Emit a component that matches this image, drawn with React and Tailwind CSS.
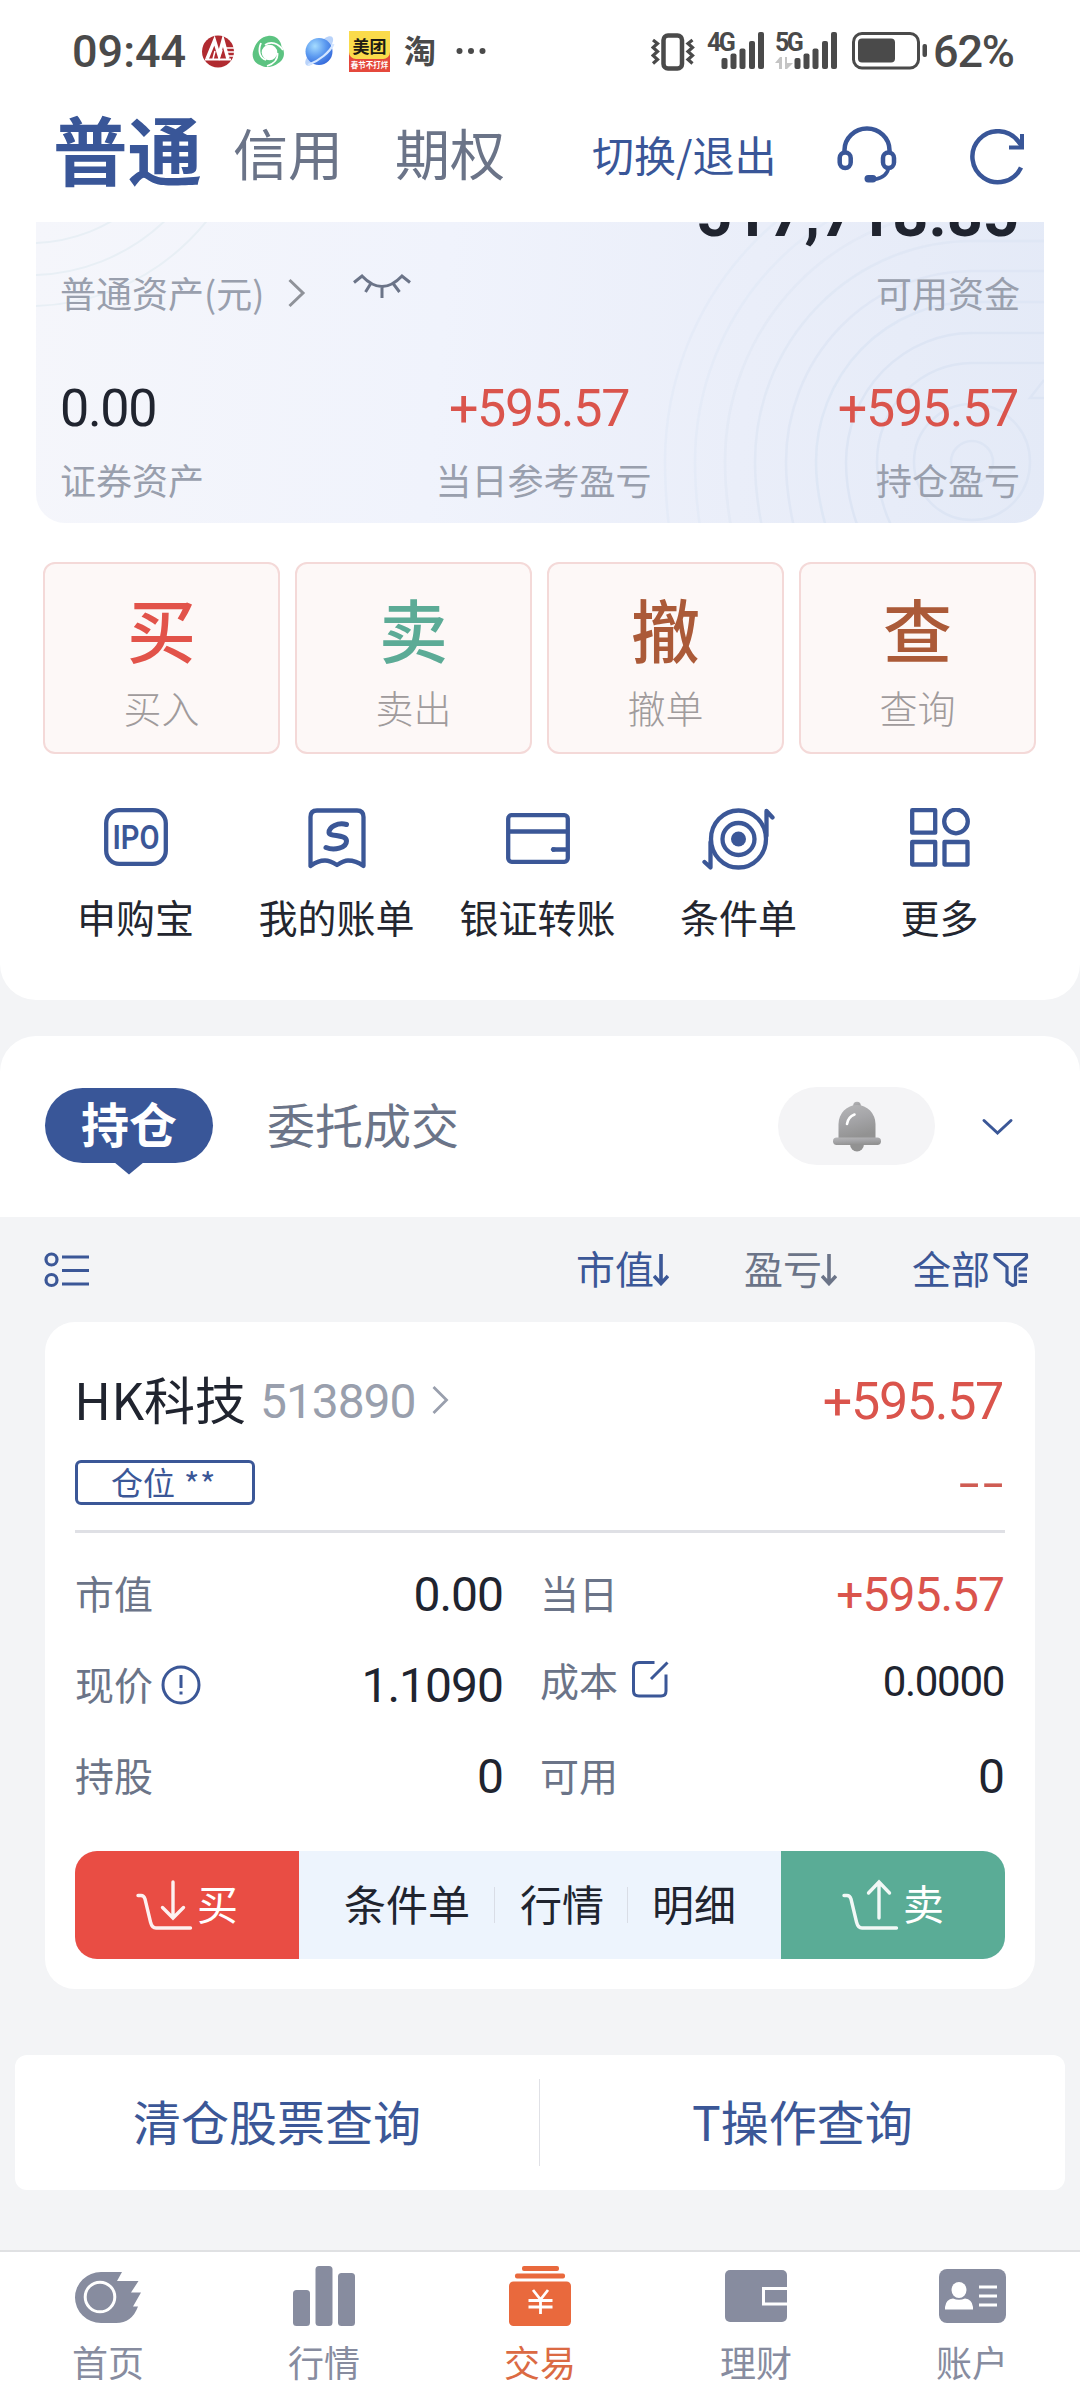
const CJK = "font-['Noto_Sans_CJK_SC',sans-serif]";
const NUM = "font-['Roboto','Noto_Sans_CJK_SC',sans-serif]";

function StatusBar() {
  return (
    <div className={`flex h-[102px] items-start text-[#4a4a4a] ${NUM}`}>
      <span className="mt-[29px] ml-[72px] w-[114px] text-[45px] leading-none font-medium whitespace-nowrap">09:44</span>
      <svg className="mt-[35px] ml-[16px]" width="32" height="33" viewBox="0 0 32 33">
        <circle cx="16" cy="16.5" r="16" fill="#b02a30" />
        <g stroke="#fff" fill="none" strokeWidth="2">
          <path d="M3 24.5h26" />
          <path d="M5 24 12.5 5.5 17 20 21 5.500 26 24" strokeWidth="3.400" />
          <path d="M11 24l2-8M17 24l3-9" strokeWidth="1.500" />
          <path d="M24 13h8M24.500 17h8M25 21h7" strokeWidth="1.600" />
        </g>
      </svg>
      <svg className="mt-[35px] ml-[18px]" width="33" height="33" viewBox="0 0 33 33" fill="none">
        <path d="M16 1C23 0 29 5 29.500 11.500C34 17 32 25 26.500 28C21 33 12 33 8 30C2 28 -1 21 1.500 15C4 7 9 2 16 1Z" fill="#5cc381" />
        <circle cx="17.500" cy="17.500" r="7.800" fill="#fff" />
        <g stroke="#fff" strokeWidth="1.800">
          <path d="M13 10C19 6 26 8 31 15" />
          <path d="M25.500 18C26 24 22 29 15 31" />
          <path d="M14 25C7 23 6 15 9 8" />
        </g>
      </svg>
      <svg className="mt-[35px] ml-[19px]" width="32" height="33" viewBox="0 0 32 33">
        <defs>
          <radialGradient id="planet" cx="0.35" cy="0.3" r="0.8">
            <stop offset="0" stopColor="#a5dcff" />
            <stop offset="0.500" stopColor="#5c9af0" />
            <stop offset="1" stopColor="#2f62d8" />
          </radialGradient>
        </defs>
        <path d="M21 3c5-3 9-2 8 3-2 9-14 20-22 24-5 2-7-1-5-6z" fill="#b9d3fa" />
        <circle cx="15" cy="16.500" r="13.500" fill="url(#planet)" />
        <path d="M29.500 9C26 17 15 26 4 30" fill="none" stroke="#d4e6ff" strokeWidth="2.200" />
      </svg>
      <div className={`mt-[31px] ml-[13px] flex h-[41px] w-[41px] flex-col items-center bg-[#e5483c] text-center ${CJK}`}>
        <div className="flex h-[28px] w-full items-center justify-center rounded-b-[7px] bg-[#fadb4b] text-[17px] leading-none font-bold text-[#1c1a14]">美团</div>
        <div className="mt-[2px] text-[7.500px] leading-none font-bold whitespace-nowrap text-white">春节不打烊</div>
      </div>
      <span className={`mt-[33px] ml-[14px] text-[32px] leading-none font-bold ${CJK}`}>淘</span>
      <svg className="mt-[47px] ml-[20px]" width="30" height="8" viewBox="0 0 30 8" fill="#4a4a4a">
        <circle cx="3.500" cy="4" r="3" /><circle cx="15" cy="4" r="3" /><circle cx="26.500" cy="4" r="3" />
      </svg>
      <svg className="mt-[33px] ml-[165px]" width="44" height="38" viewBox="0 0 44 38" fill="none" stroke="#4a4a4a">
        <rect x="12.500" y="2.500" width="18.500" height="33" rx="4.500" strokeWidth="4.500" />
        <path d="M2 7l4.500 3.500-4.500 4 4.500 4-4.500 4 4.500 4-4.500 4M41.500 7l-4.500 3.500 4.500 4-4.500 4 4.500 4-4.500 4 4.500 4" strokeWidth="3.200" />
      </svg>
      <Signal label="4G" className="ml-[12px] w-[58px]" />
      <Signal label="5G" className="ml-[10px] w-[63px]" arrows />
      <svg className="mt-[32px] ml-[14px]" width="77" height="38" viewBox="0 0 77 38">
        <rect x="1.500" y="1.500" width="65" height="34.500" rx="8.500" fill="none" stroke="#4a4a4a" strokeWidth="3" />
        <rect x="6" y="6.500" width="37" height="24" rx="4" fill="#4a4a4a" />
        <rect x="70.500" y="12" width="4.500" height="13" rx="2" fill="#4a4a4a" />
      </svg>
      <span className="mt-[29px] ml-[4px] text-[45px] leading-none font-medium tracking-[-1.2px]">62%</span>
    </div>
  );
}

function Signal({ label, className, arrows }) {
  return (
    <div className={`relative mt-[32px] h-[38px] ${className}`}>
      <span className="absolute top-[-2px] left-0 text-[25px] leading-none font-bold tracking-[-2.500px]">{label}</span>
      <svg className="absolute top-0 right-0" width="63" height="38" viewBox="0 0 63 38" fill="#4a4a4a">
        {arrows && <path d="M0 31l5-6h2v12H4v-6zM10 25h2v6h6l-6 6h-2z" fill="#c4c4c4" />}
        <rect x="19.500" y="26" width="6" height="11" rx="2" />
        <rect x="28.500" y="21.500" width="6" height="15.500" rx="2" />
        <rect x="37.500" y="16.500" width="6" height="20.500" rx="2" />
        <rect x="47" y="9" width="6" height="28" rx="2" />
        <rect x="56" y="0" width="6" height="37" rx="2" />
      </svg>
    </div>
  );
}

function Header() {
  return (
    <div className="flex h-[120px] items-start leading-none whitespace-nowrap text-[#6b7488]">
      <span className="mt-[9px] ml-[53px] w-[149px] text-[74.5px] leading-none font-bold text-[#395698]">普通</span>
      <span className="mt-[22px] ml-[31px] text-[55px]">信用</span>
      <span className="mt-[22px] ml-[52px] text-[55px]">期权</span>
      <span className="mt-[31px] ml-[87px] w-[184px] text-[42px] text-[#395698]">切换/退出</span>
      <svg className="mt-[24px] ml-[61px]" width="60" height="58" viewBox="0 0 60 58" fill="none" stroke="#395698" strokeWidth="4.500">
        <path d="M7.500 26V24a22.500 21.500 0 0 1 45 0v2" />
        <rect x="2.700" y="26.500" width="11" height="15.500" rx="5.500" />
        <rect x="46" y="26.500" width="11" height="15.500" rx="5.500" />
        <path d="M51.500 42c-1 6-6 10-14 11.500" strokeWidth="3.600" />
        <rect x="27.500" y="49" width="12" height="7.500" rx="3.700" fill="#395698" stroke="none" />
      </svg>
      <svg className="mt-[27px] ml-[73px]" width="56" height="56" viewBox="0 0 56 56" fill="none" stroke="#395698" strokeWidth="4.500">
        <path d="M51 38.500A25.500 25.500 0 1 1 48 12l4 5" />
        <path d="M52 5v13.500H39" strokeWidth="4" />
      </svg>
    </div>
  );
}

function AssetCard() {
  return (
    <div className="relative mx-[36px] h-[301px] overflow-hidden rounded-b-[29px] bg-linear-[95deg,#f5f6fb_0%,#f0f3fc_40%,#eaeef9_70%,#e4eaf7_100%] text-[36px] leading-none text-[#999fad]">
      <svg className="absolute inset-0" width="1008" height="301" viewBox="0 0 1008 301" fill="none" strokeWidth="2">
        <g stroke="#e8eff5">
          <circle cx="-6" cy="-142" r="163" /><circle cx="-6" cy="-142" r="195" /><circle cx="-6" cy="-142" r="226" />
        </g>
        <g stroke="#dde5f4" strokeWidth="2.500">
          <circle cx="936" cy="240" r="21" /><circle cx="936" cy="240" r="58" />
          <path d="M1008 141H936A95 99 0 0 0 841 240Q841 275 856 305" />
          <path d="M1008 111H936A126 130 0 0 0 810 240Q810 273 822 305" />
          <path d="M1008 80H936A156 160 0 0 0 780 240Q780 270 790 305" opacity="0.900" />
          <path d="M1008 49H936A186 191 0 0 0 750 240Q750 270 758 305" opacity="0.800" />
          <path d="M1008 19H936A217 221 0 0 0 719 240Q719 270 726 305" opacity="0.700" />
          <path d="M936-12A247 252 0 0 0 689 240Q689 270 695 305" opacity="0.500" />
          <path d="M936-42A277 282 0 0 0 659 240Q659 270 664 305" opacity="0.400" />
          <path d="M936-72A307 312 0 0 0 629 240Q629 270 633 305" opacity="0.400" />
          <path d="M1008 158l-14 18h14" />
        </g>
      </svg>
      <div className="relative px-[24px]">
        <div className={`-mt-[39px] pr-[1px] text-right text-[63px] leading-none font-bold whitespace-nowrap text-[#20242f] ${NUM}`}>517,718.85</div>
        <div className="mt-[28px] flex h-[36px] items-start">
          <span className="w-[203px] whitespace-nowrap">普通资产(元)</span>
          <svg className="mt-[4px] ml-[25px]" width="18" height="30" viewBox="0 0 18 30" fill="none" stroke="#8f9299" strokeWidth="3"><path d="M1.500 2 15 15 1.500 28" /></svg>
          <svg className="-mt-[1px] ml-[46px]" width="60" height="26" viewBox="0 0 60 26" fill="none" stroke="#6b7488" strokeWidth="3"><path d="M2 9.500 10 3Q30 24 50 3L58 9.500M18.500 11l-5 8M30 14v11M41.500 11l6 8" /></svg>
          <span className="ml-auto">可用资金</span>
        </div>
        <div className={`mt-[73px] grid grid-cols-3 text-[52px] leading-none tracking-[-1.3px] text-[#da544c] ${NUM}`}>
          <span className="text-[#20242f]">0.00</span>
          <span className="pr-[2px] text-center">+595.57</span>
          <span className="pr-[2px] text-right">+595.57</span>
        </div>
        <div className="mt-[26px] grid grid-cols-3">
          <span>证券资产</span>
          <span className="pl-[7px] text-center">当日参考盈亏</span>
          <span className="text-right">持仓盈亏</span>
        </div>
      </div>
    </div>
  );
}

const actions = [
  { char: "买", label: "买入", color: "text-[#e2534a]" },
  { char: "卖", label: "卖出", color: "text-[#5cab96]" },
  { char: "撤", label: "撤单", color: "text-[#ab5a38]" },
  { char: "查", label: "查询", color: "text-[#ab5a38]" },
];

function Actions() {
  return (
    <div className="mt-[39px] ml-[43px] grid w-[993px] grid-cols-4 gap-[15px] leading-none">
      {actions.map((a) => (
        <div key={a.char} className="flex h-[192px] flex-col items-center rounded-[12px] border-2 border-[#f4d9d8] bg-[#fdf8f7] pt-[30px]">
          <span className={`text-[69px] leading-none font-medium ${a.color}`}>{a.char}</span>
          <span className="mt-[25px] text-[38px] leading-none font-light text-[#a09b9c]">{a.label}</span>
        </div>
      ))}
    </div>
  );
}

const tools = [
  {
    label: "申购宝",
    icon: (
      <svg width="64" height="58" viewBox="0 0 64 58" fill="none" stroke="#3b5797" strokeWidth="4.300">
        <rect x="2.200" y="2.200" width="59.600" height="53.600" rx="13" />
        <text x="32" y="41" textAnchor="middle" fontFamily="Roboto" fontSize="33" fontWeight="600" fill="#3b5797" stroke="none" textLength="47" lengthAdjust="spacingAndGlyphs">IPO</text>
      </svg>
    ),
  },
  {
    label: "我的账单",
    icon: (
      <svg width="58" height="61" viewBox="0 0 58 61" fill="none" stroke="#3b5797" strokeWidth="4.300" strokeLinejoin="round">
        <path d="M2.500 58V9Q2.500 2.500 9 2.500H49Q55.500 2.500 55.500 9V58Q48 52.500 40 52.500Q36 52.500 29 57Q22 52.500 17 52.500Q10 52.500 2.500 58Z" />
        <path d="M38.500 16.500C30 14 21 19 21 24.500C21 29 38.500 26 38.500 33C38.500 40 26 43 18 39.500" strokeWidth="5" strokeLinecap="round" />
      </svg>
    ),
  },
  {
    label: "银证转账",
    icon: (
      <svg className="mt-[5px]" width="64" height="51" viewBox="0 0 64 51" fill="none" stroke="#3b5797" strokeWidth="4.300">
        <rect x="2.200" y="2.200" width="59.600" height="46.600" rx="3.500" />
        <path d="M2 18.500h60M62 36.500H46" />
        <path d="M47 36.500h1" strokeLinecap="round" />
      </svg>
    ),
  },
  {
    label: "条件单",
    icon: (
      <svg width="73" height="62" viewBox="0 0 73 62" fill="none" stroke="#3b5797" strokeWidth="4.300" strokeLinecap="round" strokeLinejoin="round">
        <ellipse cx="36.500" cy="31" rx="27.500" ry="28.500" />
        <circle cx="36.500" cy="31" r="16" />
        <circle cx="36.500" cy="31" r="7.500" fill="#3b5797" stroke="none" />
        <path d="M64.500 28V3L70.500 9.500M8.500 34V59.500L2.500 54" />
      </svg>
    ),
  },
  {
    label: "更多",
    icon: (
      <svg width="60" height="60" viewBox="0 0 60 60" fill="none" stroke="#3b5797" strokeWidth="4.300" strokeLinejoin="round">
        <rect x="2.200" y="2.200" width="23" height="22.500" />
        <ellipse cx="46" cy="13.500" rx="11.800" ry="11.800" />
        <rect x="2.200" y="34" width="23" height="22.500" />
        <rect x="34.500" y="34" width="23" height="22.500" />
      </svg>
    ),
  },
];

function Tools() {
  return (
    <div className="mt-[54px] ml-[35px] grid w-[1005px] grid-cols-5 text-[39px] leading-none text-[#23262f]">
      {tools.map((t) => (
        <div key={t.label} className="flex flex-col items-center">
          <div className="h-[62px]">{t.icon}</div>
          <span className="mt-[27px] whitespace-nowrap">{t.label}</span>
        </div>
      ))}
    </div>
  );
}

function Tabs() {
  return (
    <div className="mt-[36px] flex h-[181px] items-start rounded-t-[36px] bg-white pt-[52px] leading-none">
      <div className="relative ml-[45px] flex h-[75px] w-[168px] items-center justify-center rounded-full bg-[#395698] pb-[7px] text-[48px] font-bold text-white">
        持仓
        <svg className="absolute top-[74px] left-[69px]" width="30" height="13" viewBox="0 0 30 13" fill="#395698"><path d="M0 0h30L15 12.500z" /></svg>
      </div>
      <span className="mt-[11px] ml-[54px] w-[192px] text-[48px] whitespace-nowrap text-[#6b7488]">委托成交</span>
      <div className="-mt-[1px] ml-[319px] flex h-[78px] w-[157px] items-center justify-center rounded-full bg-[#f4f4f6]">
        <svg width="48" height="51" viewBox="0 0 48 51">
          <defs>
            <linearGradient id="bell" x1="0" y1="0" x2="0.300" y2="1">
              <stop offset="0" stopColor="#b6b6b8" /><stop offset="0.500" stopColor="#a5a5a8" /><stop offset="1" stopColor="#929292" />
            </linearGradient>
          </defs>
          <g fill="url(#bell)">
            <circle cx="24" cy="4.500" r="3.800" />
            <path d="M5.500 38V23a18.500 19 0 0 1 37 0v15z" />
            <rect x="0" y="36.500" width="48" height="7.500" rx="3.700" />
            <path d="M17 43h14a7 7.500 0 0 1-14 0z" fill="#929292" />
          </g>
          <path d="M14 23q1-7 7.500-9.500" fill="none" stroke="#fff" strokeWidth="2.600" strokeLinecap="round" />
        </svg>
      </div>
      <svg className="mt-[30px] ml-[46px]" width="34" height="18" viewBox="0 0 34 18" fill="none" stroke="#3b5797" strokeWidth="3" strokeLinecap="round"><path d="M3 2.500 16.500 15 30 2.500" /></svg>
    </div>
  );
}

function DownArrow({ color }) {
  return (
    <svg className="mt-[6px] -ml-[1px]" width="16" height="32" viewBox="0 0 16 32" fill="none" stroke={color} strokeWidth="3.600"><path d="M8 0v29M1 22l7 7.500 7-7.500" /></svg>
  );
}

function SortRow() {
  return (
    <div className="flex h-[105px] items-start pt-[31px] text-[39px] leading-none whitespace-nowrap text-[#3b5797]">
      <svg className="mt-[4px] ml-[44px]" width="45" height="36" viewBox="0 0 45 36" fill="none" stroke="#3b5797" strokeWidth="3.200">
        <circle cx="7.500" cy="7.500" r="5.500" /><circle cx="7.500" cy="28" r="5.500" />
        <path d="M18 5h27M18 18.500h27M18 32h27" />
      </svg>
      <span className="ml-[487px]">市值</span>
      <DownArrow color="#3b5797" />
      <span className="ml-[75px] text-[#6b7488]">盈亏</span>
      <DownArrow color="#6b7488" />
      <span className="ml-[75px]">全部</span>
      <svg className="mt-[4px] ml-[3px]" width="36" height="36" viewBox="0 0 36 36" fill="none" stroke="#3b5797" strokeWidth="3.200" strokeLinejoin="round">
        <path d="M2 2.500H33.500V5.500L22.500 15V32.500L19.500 33.500 14 29.500V15L2 5.500Z" />
        <path d="M25.500 17h8.500M25.500 23h8.500M25.500 29.500h8.500" />
      </svg>
    </div>
  );
}

function Row({ l1, v1, l2, v2, red, small, icon1, icon2 }) {
  return (
    <div className="flex h-[91px] items-center text-[39px] leading-none whitespace-nowrap text-[#6b7488]">
      <div className="flex w-[428px] items-center justify-between">
        <span className="flex items-center pb-[5px]">{l1}{icon1}</span>
        <span className={`text-[48px] tracking-[-1px] text-[#20242f] ${NUM}`}>{v1}</span>
      </div>
      <div className={`ml-[37px] flex grow items-center justify-between pr-px ${small ? "pb-[8px]" : ""}`}>
        <span className="flex items-center pb-[5px]">{l2}{icon2}</span>
        <span className={`${small ? "text-[42px] tracking-[-1.3px]" : "text-[48px] tracking-[-1px]"} ${red ? "text-[#da544c]" : "text-[#20242f]"} ${NUM}`}>{v2}</span>
      </div>
    </div>
  );
}

function Cart({ up }) {
  return (
    <svg className="mr-[4px]" width="57" height="52" viewBox="0 0 57 52" fill="none" stroke="#fff" strokeWidth="3.400" strokeLinecap="round" opacity="0.920">
      <path d="M2 16.500H5Q8 16.500 9 20L14.500 43Q16 49 20 49H54.500" />
      <path d={up ? "M37 39V3M26.500 14 37 3 47.500 14" : "M37 3V39M26.500 28.500 37 39 47.500 28.500"} />
    </svg>
  );
}

function Holding() {
  return (
    <div className="mx-[45px] h-[667px] rounded-[30px] bg-white px-[30px] pt-[51px] leading-none">
      <div className="flex h-[51px] items-start whitespace-nowrap">
        <span className="-ml-px w-[172px] text-[51px] text-[#20242f]">HK科技</span>
        <span className={`mt-[5px] ml-[14px] w-[158px] text-[48px] tracking-[-1.100px] text-[#999fad] ${NUM}`}>513890</span>
        <svg className="mt-[12px] ml-[14px]" width="18" height="30" viewBox="0 0 18 30" fill="none" stroke="#999fad" strokeWidth="2.800"><path d="M1.500 2 14.500 15 1.500 28" /></svg>
        <span className={`mt-[3px] mr-[2px] ml-auto text-[52px] tracking-[-1.3px] text-[#da544c] ${NUM}`}>+595.57</span>
      </div>
      <div className="mt-[36px] flex h-[45px] items-start justify-between">
        <div className="flex h-[45px] w-[180px] items-center justify-center rounded-[6px] border-[3px] border-[#3b5797] pr-[3px] pb-[3px] text-[32px] text-[#3b5797]">
          <span>仓位</span>
          <span className="mt-[5px] ml-[9px] text-[33px] tracking-[0.500px]">**</span>
        </div>
        <span className="mt-[-22px] text-[72px] leading-none font-light text-[#cf5c53]">--</span>
      </div>
      <div className="mt-[25px] h-[3px] bg-[#dfe0e5]" />
      <div className="mt-[16px]">
        <Row l1="市值" v1="0.00" l2="当日" v2="+595.57" red />
        <Row
          l1="现价"
          v1="1.1090"
          l2="成本"
          v2="0.0000"
          small
          icon1={
            <svg className="mt-[3px] ml-[8px]" width="40" height="40" viewBox="0 0 40 40" fill="none" stroke="#3b5797" strokeWidth="3"><circle cx="20" cy="20" r="18" /><path d="M20 10v13M20 26.500v3" /></svg>
          }
          icon2={
            <svg className="mt-[1px] ml-[14px]" width="37" height="37" viewBox="0 0 37 37" fill="none" stroke="#3b5797" strokeWidth="3"><path d="M22.500 1.500H7Q1.500 1.500 1.500 7V30Q1.500 35 7 35H29Q34 35 34 30V13.500M19 18 35.500 1.500" /></svg>
          }
        />
        <Row l1="持股" v1="0" l2="可用" v2="0" />
      </div>
      <div className="mt-[29px] flex h-[108px] items-center overflow-hidden rounded-[22px] bg-[#edf4fd] text-[42px] whitespace-nowrap text-[#20242f]">
        <div className="flex h-full w-[224px] items-center bg-[#e94d44] pl-[61px] text-white">
          <Cart /><span className="pb-[6px] text-[41px]">买</span>
        </div>
        <span className="ml-[45px] pb-[4px]">条件单</span>
        <div className="ml-[24px] h-[36px] w-px bg-[#d9dde6]" />
        <span className="ml-[25px] pb-[4px]">行情</span>
        <div className="ml-[23px] h-[36px] w-px bg-[#d9dde6]" />
        <span className="ml-[24px] pb-[4px]">明细</span>
        <div className="ml-auto flex h-full w-[224px] items-center bg-[#5aac96] pl-[61px] text-white">
          <Cart up /><span className="pb-[6px] text-[41px]">卖</span>
        </div>
      </div>
    </div>
  );
}

const nav = [
  {
    label: "首页",
    icon: (
      <svg className="mt-[6px]" width="66" height="52" viewBox="0 0 66 52">
        <path d="M26 0H47L42 9H63.500L56 20.500H66L58 34.500H63Q57 51 41 51H26A26 25.500 0 0 1 26 0Z" fill="#878c9f" />
        <circle cx="25" cy="25" r="14.800" fill="none" stroke="#fff" strokeWidth="3" />
      </svg>
    ),
  },
  {
    label: "行情",
    icon: (
      <svg width="62" height="60" viewBox="0 0 62 60" fill="#878c9f">
        <rect x="0" y="24" width="17" height="36" rx="3.500" /><rect x="22.500" width="17" height="60" rx="3.500" /><rect x="45" y="7" width="17" height="53" rx="3.500" />
      </svg>
    ),
  },
  {
    label: "交易",
    active: true,
    icon: (
      <svg width="62" height="60" viewBox="0 0 62 60" fill="#e9693d">
        <rect x="13" width="37" height="5" rx="2" /><rect x="6" y="7.500" width="50" height="5" rx="2" /><rect y="15.500" width="62" height="44.500" rx="4.500" />
        <path d="M24 24l7.500 9.500L39 24M31.500 33v15M19.500 34.500h24M19.500 41h24" fill="none" stroke="#fff" strokeWidth="2.800" />
      </svg>
    ),
  },
  {
    label: "理财",
    icon: (
      <svg className="mt-[4px]" width="62" height="52" viewBox="0 0 62 52" fill="none">
        <rect width="62" height="52" rx="5" fill="#878c9f" />
        <path d="M62 18.500H38.500V34H62" stroke="#fff" strokeWidth="3" />
      </svg>
    ),
  },
  {
    label: "账户",
    icon: (
      <svg className="mt-[3px]" width="67" height="54" viewBox="0 0 67 54" fill="#fff">
        <rect width="67" height="54" rx="8" fill="#878c9f" />
        <ellipse cx="20" cy="21" rx="7.500" ry="8" />
        <path d="M6 40.500V38Q7 30 14 29.500Q20 32 26 29.500Q33 30 34 38V40.500Z" />
        <path d="M40 18h18M40 27h18M40 36h18" stroke="#fff" strokeWidth="3" />
      </svg>
    ),
  },
];

function BottomNav() {
  return (
    <div className="mt-[60px] grid h-[150px] grid-cols-5 border-t-2 border-[#e0e1e3] bg-white pt-[14px] text-[36px] leading-none text-[#878c9f]">
      {nav.map((n) => (
        <div key={n.label} className={`flex flex-col items-center ${n.active ? "text-[#db6a43]" : ""}`}>
          <div className="h-[60px]">{n.icon}</div>
          <span className="mt-[17px]">{n.label}</span>
        </div>
      ))}
    </div>
  );
}

export default function App() {
  return (
    <div className={`h-[2400px] w-[1080px] overflow-hidden bg-[#f3f4f6] ${CJK}`}>
      <div className="h-[1000px] rounded-b-[36px] bg-white">
        <StatusBar />
        <Header />
        <AssetCard />
        <Actions />
        <Tools />
      </div>
      <Tabs />
      <SortRow />
      <Holding />
      <div className="mx-[15px] mt-[66px] flex h-[135px] items-center rounded-[12px] bg-white text-center text-[48px] leading-none text-[#3b5797]">
        <span className="w-[524px] pb-[5px]">清仓股票查询</span>
        <div className="h-[87px] w-px bg-[#e0e1e6]" />
        <span className="w-[525px] pb-[5px]">T操作查询</span>
      </div>
      <BottomNav />
    </div>
  );
}
